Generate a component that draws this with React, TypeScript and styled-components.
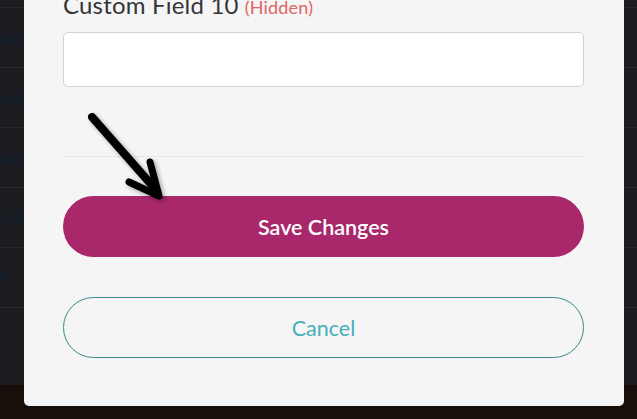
import React from 'react'
import styled, { createGlobalStyle } from 'styled-components'

const GlobalStyle = createGlobalStyle`
  html, body {
    margin: 0;
    padding: 0;
    height: 100%;
    overflow: hidden;
    background: #170f0a;
  }
  #root {
    height: 100%;
  }
`

interface BackRow {
  id: number
  label: string
}

// tails of the list entries that peek out beside the dialog
const backRows: BackRow[] = [
  { id: 1, label: 'nks' },
  { id: 2, label: 'ady' },
  { id: 3, label: 'nks' },
  { id: 4, label: 'rM' },
  { id: 5, label: 'li' },
]

const Screen = styled.div`
  position: relative;
  width: 637px;
  height: 419px;
  overflow: hidden;
  background: #170f0a;
  font-family: Lato, 'Open Sans', sans-serif;
`

const Backdrop = styled.div`
  height: 385px;
  background: #1b1b20;
  display: flex;
  flex-direction: column;
  padding-top: 7px;
  box-sizing: border-box;
`

const ListRow = styled.div`
  height: 59px;
  border-top: 1px solid #26262c;
  display: flex;
  align-items: center;
  overflow: hidden;
  &:last-child {
    border-bottom: 1px solid #26262c;
  }
`

const RowText = styled.span`
  margin-left: 0;
  font-size: 17px;
  color: #0f1f2c;
  white-space: nowrap;
`

const Modal = styled.div`
  position: absolute;
  left: 24px;
  top: -40px;
  width: 600px;
  height: 446px;
  box-sizing: border-box;
  padding: 0 40px 0 39px;
  background: #f5f5f5;
  border-radius: 5px;
  display: flex;
  flex-direction: column;
`

const FieldLabel = styled.label`
  margin-top: 31px;
  font-size: 24px;
  line-height: 28px;
  color: #333538;
  letter-spacing: 0.2px;
  white-space: nowrap;
`

const HiddenTag = styled.span`
  margin-left: 6px;
  font-size: 18px;
  color: #e06464;
`

const TextInput = styled.input`
  margin-top: 11px;
  height: 55px;
  box-sizing: border-box;
  border: 1px solid #d2d2d2;
  border-radius: 5px;
  background: #fff;
  outline: none;
`

const Divider = styled.hr`
  margin: 69px 0 0;
  border: 0;
  border-top: 1px dotted #d8d8d8;
`

const PillButton = styled.button<{ $primary?: boolean }>`
  height: 61px;
  border-radius: 31px;
  font-family: Lato, 'Open Sans', sans-serif;
  font-size: 21.5px;
  cursor: pointer;
  background: ${p => (p.$primary ? '#a8286b' : 'transparent')};
  color: ${p => (p.$primary ? '#ffffff' : '#45b0ba')};
  font-weight: ${p => (p.$primary ? 600 : 400)};
  border: ${p => (p.$primary ? 'none' : '1px solid #3c8a8c')};
`

const SaveButton = styled(PillButton)`
  margin-top: 39px;
`

const CancelButton = styled(PillButton)`
  margin-top: 40px;
`

const Pointer = styled.svg`
  position: absolute;
  left: 80px;
  top: 105px;
  filter: drop-shadow(2px 2px 2px rgba(0, 0, 0, 0.35));
`

const App: React.FC = () => {
  return (
    <Screen>
      <GlobalStyle />
      <Backdrop>
        {backRows.map(row => (
          <ListRow key={row.id}>
            <RowText>{row.label}</RowText>
          </ListRow>
        ))}
      </Backdrop>
      <Modal>
        <FieldLabel>
          Custom Field 10<HiddenTag>(Hidden)</HiddenTag>
        </FieldLabel>
        <TextInput type="text" />
        <Divider />
        <SaveButton $primary>Save Changes</SaveButton>
        <CancelButton>Cancel</CancelButton>
      </Modal>
      {/* hand-drawn arrow pointing at the save button */}
      <Pointer width="100" height="100" viewBox="0 0 100 100">
        <path
          d="M12 12 L77 86"
          stroke="#000"
          strokeWidth="8"
          strokeLinecap="round"
          fill="none"
        />
        <path
          d="M70 57 L79 91 L49 77"
          stroke="#000"
          strokeWidth="7"
          strokeLinecap="round"
          strokeLinejoin="round"
          fill="none"
        />
      </Pointer>
    </Screen>
  )
}

export default App
